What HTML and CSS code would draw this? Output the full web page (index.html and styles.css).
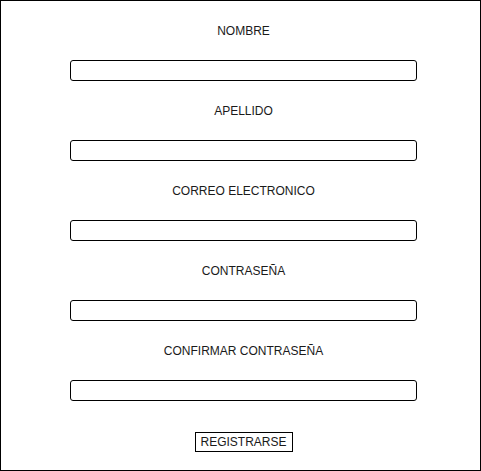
FILE: index.html
```html
<!DOCTYPE html>
<html lang="es">
<head>
<meta charset="utf-8">
<title>Registro</title>
<link rel="stylesheet" href="styles.css">
</head>
<body>
<div class="frame">
  <form class="form">
    <div class="field">
      <label class="label">NOMBRE</label>
      <div class="input"></div>
    </div>
    <div class="field">
      <label class="label">APELLIDO</label>
      <div class="input"></div>
    </div>
    <div class="field">
      <label class="label">CORREO ELECTRONICO</label>
      <div class="input"></div>
    </div>
    <div class="field">
      <label class="label">CONTRASEÑA</label>
      <div class="input"></div>
    </div>
    <div class="field">
      <label class="label">CONFIRMAR CONTRASEÑA</label>
      <div class="input"></div>
    </div>
    <div class="button">REGISTRARSE</div>
  </form>
</div>
</body>
</html>
```
FILE: styles.css
```css
html, body {
  margin: 0;
  padding: 0;
  background: #ffffff;
}
.frame {
  box-sizing: border-box;
  width: 481px;
  height: 471px;
  border: 1px solid #000;
  padding: 23px 0 0 69px;
  font-family: "Liberation Sans", Arial, sans-serif;
  font-size: 12px;
  color: #1a1a1a;
}
.form {
  width: 347px;
  display: flex;
  flex-direction: column;
  align-items: center;
  gap: 23px;
}
.field {
  width: 100%;
  display: flex;
  flex-direction: column;
  align-items: center;
  gap: 22px;
}
.label {
  line-height: 14px;
  height: 14px;
}
.input {
  box-sizing: border-box;
  width: 347px;
  height: 21px;
  border: 1px solid #000;
  border-radius: 3px;
}
.button {
  box-sizing: border-box;
  margin-top: 8px;
  width: 98px;
  height: 20px;
  border: 1px solid #000;
  line-height: 18px;
  text-align: center;
}
```
